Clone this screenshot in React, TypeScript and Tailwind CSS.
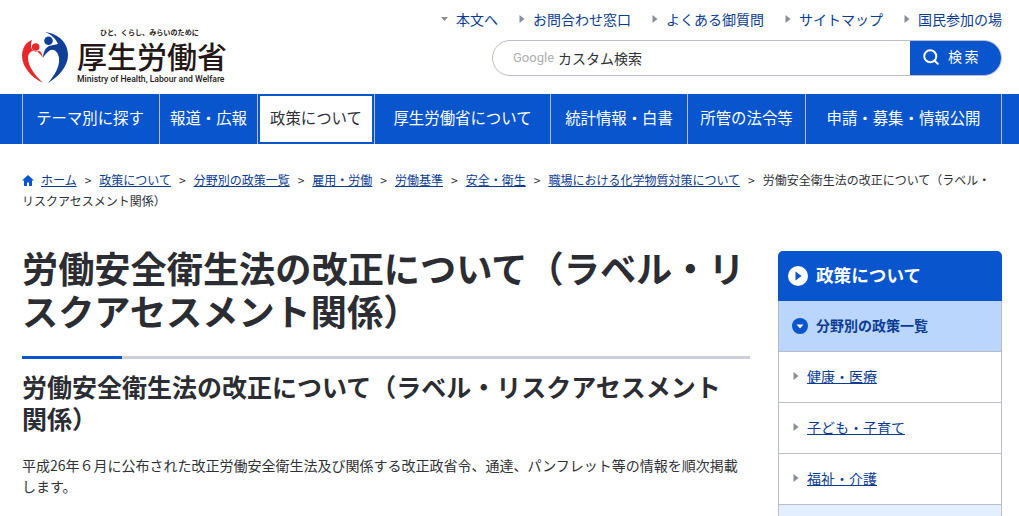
import { Search } from 'lucide-react';

const topLinks = [
  { label: '本文へ', down: true, cls: 'w-[59px]' },
  { label: 'お問合わせ窓口', down: false, cls: 'ml-[18px]' },
  { label: 'よくある御質問', down: false, cls: 'ml-[20px]' },
  { label: 'サイトマップ', down: false, cls: 'ml-[20px]' },
  { label: '国民参加の場', down: false, cls: 'ml-[20px]' },
];

const navItems = [
  { label: 'テーマ別に探す', cls: 'w-[137px] pr-[2px]' },
  { label: '報道・広報', cls: 'w-[98px]' },
  { label: '政策について', cls: 'w-[117px]', active: true },
  { label: '厚生労働省について', cls: 'w-[176px]' },
  { label: '統計情報・白書', cls: 'w-[137px]' },
  { label: '所管の法令等', cls: 'w-[118px]' },
  { label: '申請・募集・情報公開', cls: 'w-[196px]' },
];

const crumbs = ['政策について', '分野別の政策一覧', '雇用・労働', '労働基準', '安全・衛生', '職場における化学物質対策について'];

const Tri = ({ down = false }: { down?: boolean }) => (
  <svg width="8" height="10" viewBox="0 0 8 10" className="shrink-0">
    {down ? <path d="M0 3h7L3.5 7z" fill="#8a8d99" /> : <path d="M1.5 1l5 4-5 4z" fill="#8a8d99" />}
  </svg>
);

const Logo = () => (
  <svg width="46" height="52" viewBox="0 0 46 52" className="shrink-0">
    <path d="M23 1C37 3 46 12 46 24C46 36 36 46 26 52C33 44 38 35 37 27C36 20 31 17 27 20C24 22 22 25 21 27C21 22 23 17 27 15C30 14 33 14 36 13C34 8 29 3 23 1Z" fill="#0f3f96" />
    <circle cx="26.5" cy="9.7" r="4.3" fill="#0f3f96" />
    <path d="M10 9C4 11 0 17 0 25C0 36 10 47 21 52C14 45 6 36 6 27C6 22 10 19 13 20C17 21 19 24 21 27C20 22 18 18 15 21C11 21 7 17 10 9Z" fill="#e8282b" />
    <circle cx="13.7" cy="16" r="3.8" fill="#e8282b" />
  </svg>
);

export default function App() {
  return (
    <div className="h-[516px] w-[1019px] overflow-hidden bg-white font-['Noto_Sans_CJK_JP','Noto_Sans',sans-serif] text-[14px] text-[#2f3137]">
      <header className="flex h-[94px] justify-between pl-[22px] pr-[17px]">
        <div className="flex flex-col pt-[27px]">
          <div className="ml-[78px] text-[7.1px] font-bold leading-[10px] text-[#231815]">ひと、くらし、みらいのために</div>
          <div className="-mt-[6px] flex items-start">
            <Logo />
            <div className="ml-[9px] pt-[8px]">
              <div className="text-[30px] font-medium leading-[33px] text-[#231815]">厚生労働省</div>
              <div className="mt-px whitespace-nowrap font-['Roboto',sans-serif] text-[8.6px] font-medium leading-[12px] text-[#231815]">Ministry of Health, Labour and Welfare</div>
            </div>
          </div>
        </div>
        <div className="flex flex-col items-end pt-[9px]">
          <ul className="flex h-[20px] items-center">
            {topLinks.map((l) => (
              <li key={l.label} className={`flex items-center gap-[7px] ${l.cls}`}>
                <Tri down={l.down} />
                <span className="whitespace-nowrap leading-[20px] text-[#0b3c94]">{l.label}</span>
              </li>
            ))}
          </ul>
          <div className="mt-[11px] flex h-[36px] w-[510px] overflow-hidden rounded-[18px] border border-[#b9bcc9] bg-white">
            <div className="flex flex-1 items-center pl-[20px]">
              <span className="mr-[4px] font-['Roboto',sans-serif] text-[13px] text-[#b0b0b0]">Google</span>
              <span>カスタム検索</span>
            </div>
            <button className="-my-px -mr-px flex w-[92px] items-center gap-[8px] bg-[#0855cd] pb-[3px] pl-[12px] text-[14px] tracking-[2.5px] text-white">
              <Search size={18} strokeWidth={2.6} />
              検索
            </button>
          </div>
        </div>
      </header>

      <nav className="flex h-[50px] bg-[#0855cd] pl-[22px]">
        {navItems.map((n) => (
          <div key={n.label} className={`border-l-[1px] border-[#b9bcc9] ${n.cls} ${n.active ? 'p-[2px]' : ''}`}>
            <div className={`flex h-full items-center justify-center whitespace-nowrap pb-[3px] text-[15.4px] ${n.active ? 'bg-white text-[#2f3137]' : 'text-white'}`}>
              {n.label}
            </div>
          </div>
        ))}
        <div className="border-l-[1px] border-[#b9bcc9]" />
      </nav>

      <div className="px-[22px] pt-[25px] text-[12px] leading-[21px]">
        <svg width="12" height="11" viewBox="0 0 12 11" className="mr-[7px] inline-block align-[-0.5px]">
          <path d="M6 0L0 5.5h2V11h3V7.5h2V11h3V5.5h2z" fill="#0855cd" />
        </svg>
        <a className="text-[#0b3c94] underline">ホーム</a>
        {crumbs.map((c) => (
          <span key={c}>
            <span className="mx-[8px]">&gt;</span>
            <a className="text-[#0b3c94] underline">{c}</a>
          </span>
        ))}
        <span className="mx-[8px]">&gt;</span>
        労働安全衛生法の改正について（ラベル・リスクアセスメント関係）
      </div>

      <div className="mt-[35px] flex justify-between pl-[22px] pr-[17px]">
        <main className="w-[728px]">
          <h1 className="text-[36.2px] font-bold leading-[43px] text-[#2b2d33]">労働安全衛生法の改正について（ラベル・リスクアセスメント関係）</h1>
          <div className="mt-[24px] h-[3px] bg-[#cdcfd8]">
            <div className="h-full w-[100px] bg-[#0855cd]" />
          </div>
          <h2 className="mt-[11px] pr-[10px] text-[25px] font-bold leading-[32px] text-[#2b2d33]">労働安全衛生法の改正について（ラベル・リスクアセスメント関係）</h2>
          <p className="mt-[21px] leading-[21px]">平成26年６月に公布された改正労働安全衛生法及び関係する改正政省令、通達、パンフレット等の情報を順次掲載します。</p>
        </main>
        <aside className="mt-[5px] w-[224px]">
          <div className="flex h-[50px] items-center gap-[8px] rounded-t-[5px] bg-[#0855cd] pb-px pl-[10px] text-[17.6px] font-bold text-white">
            <svg width="20" height="20" viewBox="0 0 20 20"><circle cx="10" cy="10" r="10" fill="#fff" /><path d="M7.5 5.5l6 4.5-6 4.5z" fill="#0855cd" /></svg>
            政策について
          </div>
          <div className="border-x border-[#b9bcc9]">
            <div className="flex h-[51px] items-center gap-[8px] border-b border-[#b9bcc9] bg-[#bbd6fd] pb-px pl-[13px] font-bold text-[#0b3c94]">
              <svg width="16" height="16" viewBox="0 0 16 16"><circle cx="8" cy="8" r="8" fill="#0855cd" /><path d="M4.5 6.5h7L8 10.5z" fill="#fff" /></svg>
              分野別の政策一覧
            </div>
            {['健康・医療', '子ども・子育て', '福祉・介護'].map((t) => (
              <div key={t} className="flex h-[51px] items-center gap-[7px] border-b border-[#b9bcc9] pb-[2px] pl-[13px]">
                <Tri />
                <a className="text-[#0b3c94] underline">{t}</a>
              </div>
            ))}
            <div className="h-[40px] bg-[#e3effe]" />
          </div>
        </aside>
      </div>
    </div>
  );
}
